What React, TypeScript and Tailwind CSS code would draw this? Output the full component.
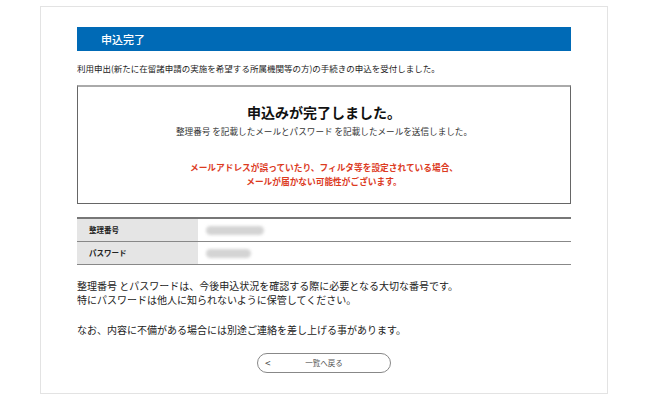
const font = '[font-family:"Noto_Sans_CJK_JP","Noto_Sans",sans-serif]';

function InfoRow({ label, blurWidth }: { label: string; blurWidth: string }) {
  return (
    <div className="flex h-[23px] border-b border-[#888]">
      <div className="flex w-[121px] items-center bg-[#e5e5e5] pl-[12px] text-[7.5px] font-bold text-[#222]">
        {label}
      </div>
      <div className="flex flex-1 items-center pl-[8px]">
        <div className={`h-[9px] ${blurWidth} rounded-full bg-[#d4d4d4] blur-[1.5px]`} />
      </div>
    </div>
  );
}

export default function App() {
  return (
    <div className={`min-h-[399px] bg-white pt-[6px] ${font}`}>
      <div className="mx-auto w-[568px] border border-[#e3e3e3] px-[36px] pb-[20px] pt-[20px]">
        <div className="flex h-[24px] items-center bg-[#006ab6] pl-[24px] text-[11px] font-medium text-white">
          申込完了
        </div>

        <p className="mt-[11px] text-[8.5px] leading-[12px] text-[#222]">
          利用申出(新たに在留諸申請の実施を希望する所属機関等の方)の手続きの申込を受付しました。
        </p>

        <div className="mt-[11px] h-[119px] border border-[#666] border-t-2 border-t-[#aaa] pt-[15px] text-center">
          <h2 className="text-[14px] font-bold leading-[20px] text-[#111]">申込みが完了しました。</h2>
          <p className="mt-[3px] text-[8.6px] leading-[12px] text-[#333]">
            整理番号 を記載したメールとパスワード を記載したメールを送信しました。
          </p>
          <p className="mt-[24px] text-[8.7px] font-bold leading-[14px] text-[#dc3b1f]">
            メールアドレスが誤っていたり、フィルタ等を設定されている場合、
            <br />
            メールが届かない可能性がございます。
          </p>
        </div>

        <div className="mt-[13px] border-t-2 border-[#777]">
          <InfoRow label="整理番号" blurWidth="w-[58px]" />
          <InfoRow label="パスワード" blurWidth="w-[45px]" />
        </div>

        <div className="mt-[14px] text-[10px] leading-[14px] text-[#222]">
          <p>
            整理番号 とパスワードは、今後申込状況を確認する際に必要となる大切な番号です。
            <br />
            特にパスワードは他人に知られないように保管してください。
          </p>
          <p className="mt-[16px]">なお、内容に不備がある場合には別途ご連絡を差し上げる事があります。</p>
        </div>

        <div className="mt-[16px] flex justify-center">
          <button className="relative flex h-[20px] w-[134px] items-center justify-center rounded-full border border-[#888] text-[7.5px] text-[#555]">
            <span className="absolute left-[7px] text-[10px] leading-none text-[#444]">&lt;</span>
            一覧へ戻る
          </button>
        </div>
      </div>
    </div>
  );
}
